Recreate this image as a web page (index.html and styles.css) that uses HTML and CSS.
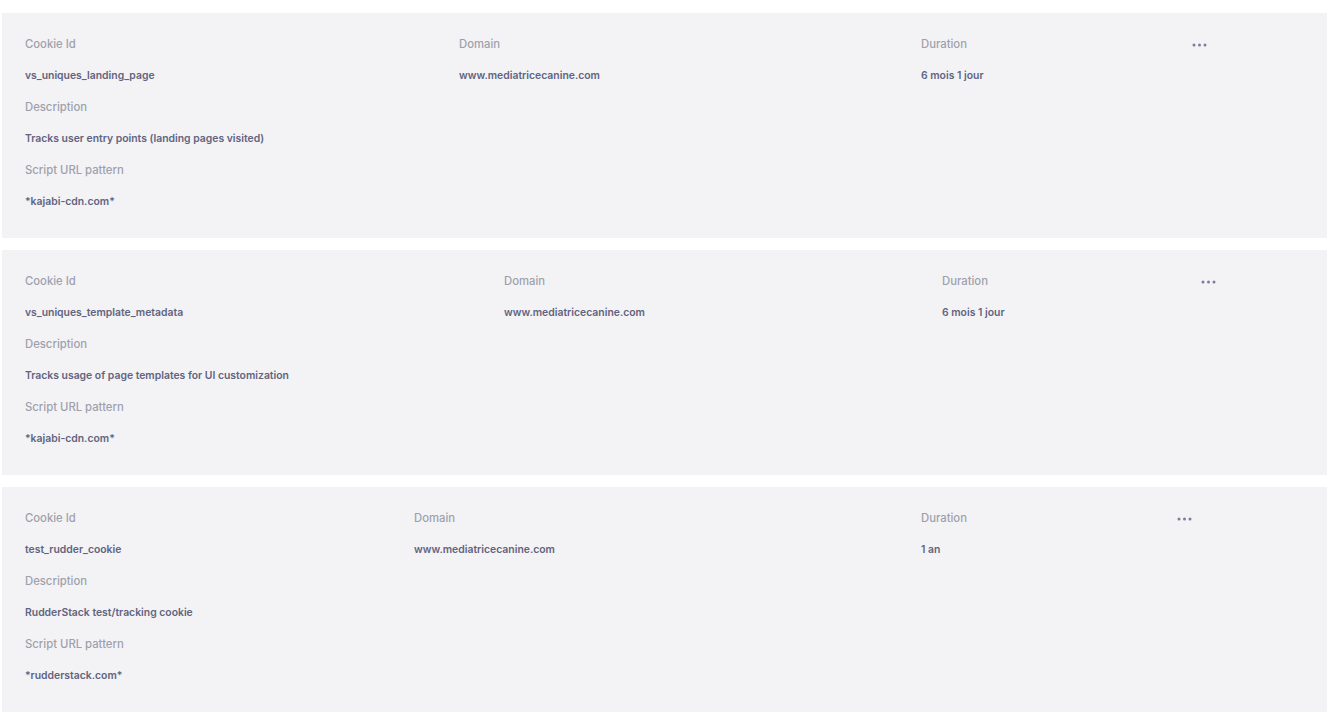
FILE: index.html
```html
<!DOCTYPE html>
<html lang="en">
<head>
    <meta charset="UTF-8">
    <meta name="viewport" content="width=device-width, initial-scale=1.0">
    <title>Cookies</title>
    <link rel="stylesheet" href="styles.css">
</head>
<body>
    <div class="cookie-list">
        <div class="cookie-card">
            <div class="cookie-head cols-landing">
                <div class="field">
                    <div class="label">Cookie Id</div>
                    <div class="value">vs_uniques_landing_page</div>
                </div>
                <div class="field">
                    <div class="label">Domain</div>
                    <div class="value">www.mediatricecanine.com</div>
                </div>
                <div class="field">
                    <div class="label">Duration</div>
                    <div class="value">6 mois 1 jour</div>
                </div>
                <div class="menu">
                    <svg width="15" height="4" viewBox="0 0 15 4"><circle cx="2" cy="2" r="1.5"/><circle cx="7.5" cy="2" r="1.5"/><circle cx="13" cy="2" r="1.5"/></svg>
                </div>
            </div>
            <div class="label">Description</div>
            <div class="value">Tracks user entry points (landing pages visited)</div>
            <div class="label">Script URL pattern</div>
            <div class="value">*kajabi-cdn.com*</div>
        </div>

        <div class="cookie-card">
            <div class="cookie-head cols-template">
                <div class="field">
                    <div class="label">Cookie Id</div>
                    <div class="value">vs_uniques_template_metadata</div>
                </div>
                <div class="field">
                    <div class="label">Domain</div>
                    <div class="value">www.mediatricecanine.com</div>
                </div>
                <div class="field">
                    <div class="label">Duration</div>
                    <div class="value">6 mois 1 jour</div>
                </div>
                <div class="menu">
                    <svg width="15" height="4" viewBox="0 0 15 4"><circle cx="2" cy="2" r="1.5"/><circle cx="7.5" cy="2" r="1.5"/><circle cx="13" cy="2" r="1.5"/></svg>
                </div>
            </div>
            <div class="label">Description</div>
            <div class="value">Tracks usage of page templates for UI customization</div>
            <div class="label">Script URL pattern</div>
            <div class="value">*kajabi-cdn.com*</div>
        </div>

        <div class="cookie-card">
            <div class="cookie-head cols-rudder">
                <div class="field">
                    <div class="label">Cookie Id</div>
                    <div class="value">test_rudder_cookie</div>
                </div>
                <div class="field">
                    <div class="label">Domain</div>
                    <div class="value">www.mediatricecanine.com</div>
                </div>
                <div class="field">
                    <div class="label">Duration</div>
                    <div class="value">1 an</div>
                </div>
                <div class="menu">
                    <svg width="15" height="4" viewBox="0 0 15 4"><circle cx="2" cy="2" r="1.5"/><circle cx="7.5" cy="2" r="1.5"/><circle cx="13" cy="2" r="1.5"/></svg>
                </div>
            </div>
            <div class="label">Description</div>
            <div class="value">RudderStack test/tracking cookie</div>
            <div class="label">Script URL pattern</div>
            <div class="value">*rudderstack.com*</div>
        </div>
    </div>
</body>
</html>
```

FILE: styles.css
```css
body {
    font-family: Inter, 'Noto Sans', sans-serif;
    margin: 0;
    padding: 0;
    background-color: #fff;
}
.cookie-list {
    display: flex;
    flex-direction: column;
    gap: 12.5px;
    padding: 13px 2px 2px 2px;
}
.cookie-card {
    background-color: #f3f3f6;
    padding: 16px 23px 21px 23px;
    height: 224.5px;
    box-sizing: border-box;
}
.cookie-head {
    display: grid;
}
.cols-landing {
    grid-template-columns: 434px 462px 271px auto;
}
.cols-template {
    grid-template-columns: 479px 438px 259px auto;
}
.cols-rudder {
    grid-template-columns: 389px 507px 256px auto;
}
.label {
    font-size: 11.3px;
    font-weight: 500;
    color: #9ea1ac;
    line-height: 31.4px;
    white-space: nowrap;
}
.value {
    font-size: 10.4px;
    font-weight: 600;
    color: #62647e;
    line-height: 31.4px;
    white-space: nowrap;
}
.menu {
    height: 31.4px;
    display: flex;
    align-items: center;
}
.menu svg {
    fill: #7b7e98;
}
```
